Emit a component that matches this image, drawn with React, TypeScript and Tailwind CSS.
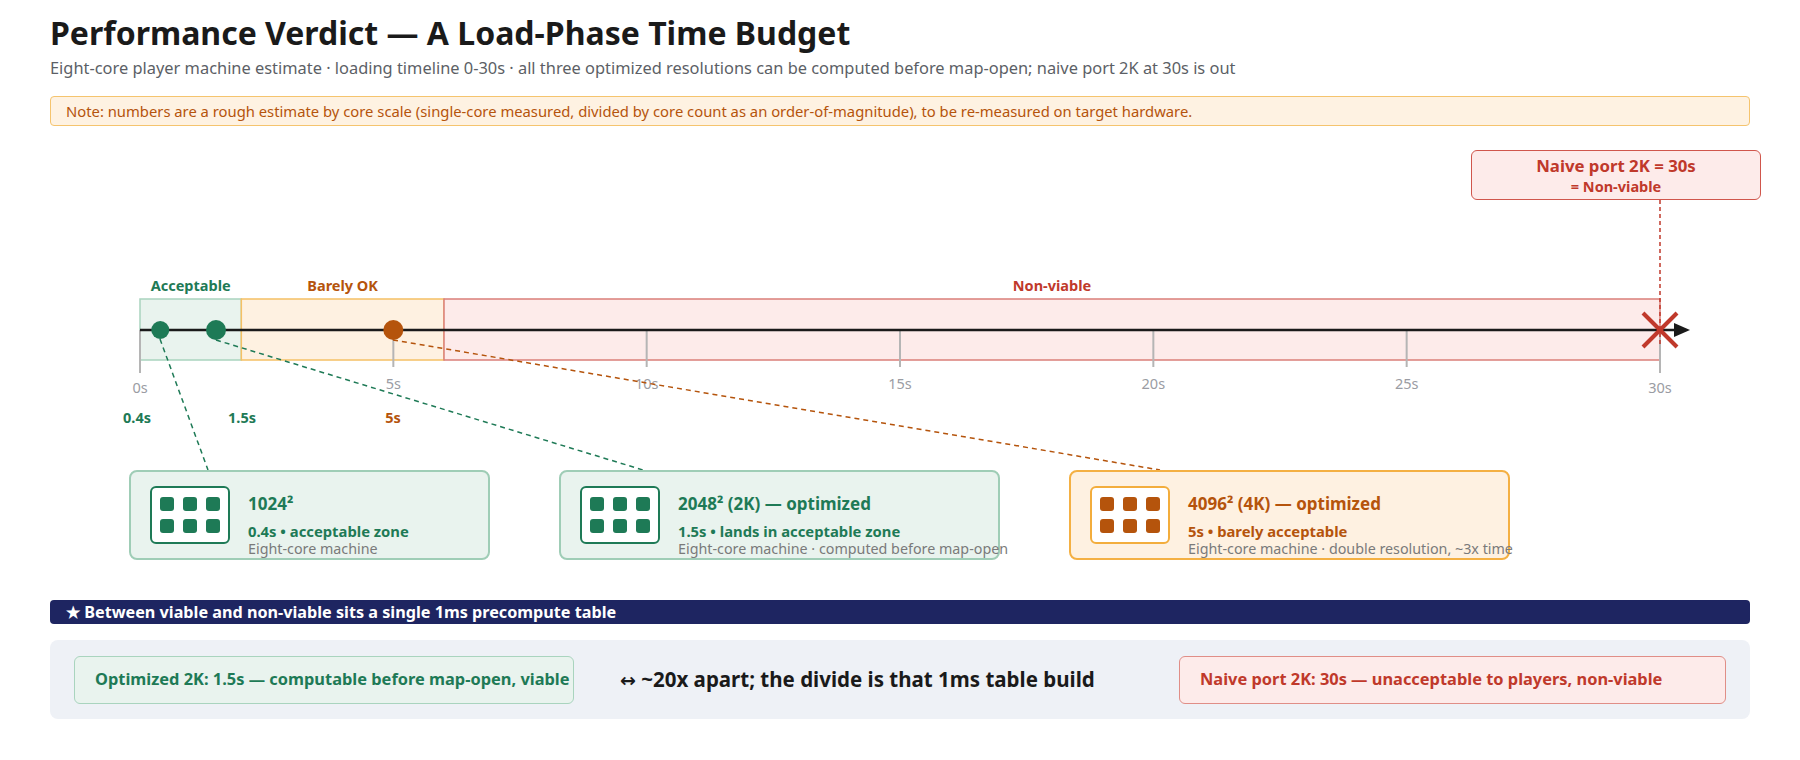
const GREEN = "#1e7a56"
const ORANGE = "#b5540c"
const RED = "#c0392b"

// timeline scale: 0s at x=140, 30s at x=1660 (page coordinates)
const tx = (t: number) => 140 + (t * 1520) / 30

const ticks = [0, 5, 10, 15, 20, 25, 30]

function Timeline() {
  return (
    <svg width="1700" height="344" viewBox="50 126 1700 344" className="block overflow-visible">
      <rect x={tx(0)} y={299} width={tx(2) - tx(0)} height={61} fill="#e9f3ee" stroke="#a9d4be" strokeWidth={1.5} />
      <rect x={tx(2)} y={299} width={tx(6) - tx(2)} height={61} fill="#fef1e1" stroke="#f5c064" strokeWidth={1.5} />
      <rect x={tx(6)} y={299} width={tx(30) - tx(6)} height={61} fill="#fdebea" stroke="#da7f79" strokeWidth={1.5} />

      <g fontSize="14.5" fontWeight="700" textAnchor="middle" dominantBaseline="central">
        <text x={(tx(0) + tx(2)) / 2} y={285} fill={GREEN}>Acceptable</text>
        <text x={(tx(2) + tx(6)) / 2} y={285} fill={ORANGE}>Barely OK</text>
        <text x={(tx(6) + tx(30)) / 2} y={285} fill={RED}>Non-viable</text>
      </g>

      {ticks.map((t) => {
        const end = t === 0 || t === 30
        return (
          <g key={t}>
            <line x1={tx(t)} y1={330} x2={tx(t)} y2={end ? 373 : 367} stroke="#b5b5b5" strokeWidth={2} />
            <text x={tx(t)} y={end ? 387 : 383} fontSize="14.5" fill="#9a9ca3" textAnchor="middle" dominantBaseline="central">
              {t}s
            </text>
          </g>
        )
      })}

      <line x1={tx(0)} y1={330} x2={1676} y2={330} stroke="#1a1a1a" strokeWidth={2.5} />
      <polygon points="1674,323 1690,330 1674,337" fill="#1a1a1a" />

      <line x1={1660} y1={200} x2={1660} y2={345} stroke={RED} strokeWidth={1.5} strokeDasharray="4 3" />
      <g stroke={RED} strokeWidth={4}>
        <line x1={1643} y1={313} x2={1677} y2={347} />
        <line x1={1643} y1={347} x2={1677} y2={313} />
      </g>

      <g strokeWidth={1.5} strokeDasharray="5 4" fill="none">
        <line x1={160} y1={339} x2={208} y2={470} stroke={GREEN} />
        <line x1={216} y1={340} x2={643} y2={470} stroke={GREEN} />
        <line x1={393} y1={340} x2={1160} y2={470} stroke={ORANGE} />
      </g>

      <circle cx={tx(0.4)} cy={330} r={9} fill={GREEN} />
      <circle cx={tx(1.5)} cy={330} r={10} fill={GREEN} />
      <circle cx={tx(5)} cy={330} r={10} fill={ORANGE} />

      <g fontSize="14.5" fontWeight="700" textAnchor="middle" dominantBaseline="central">
        <text x={137} y={417} fill={GREEN}>0.4s</text>
        <text x={242} y={417} fill={GREEN}>1.5s</text>
        <text x={393} y={417} fill={ORANGE}>5s</text>
      </g>
    </svg>
  )
}

function GridIcon({ tone }: { tone: "green" | "orange" }) {
  const box = tone === "green" ? "border-[#1e7a56]" : "border-[#f3ad3c]"
  const sq = tone === "green" ? "bg-[#1e7a56]" : "bg-[#b5540c]"
  return (
    <div className={`mt-[14px] flex h-[58px] w-[80px] shrink-0 items-center justify-center rounded-md border-2 bg-white ${box}`}>
      <div className="grid grid-cols-3 gap-x-[9px] gap-y-[8px]">
        {Array.from({ length: 6 }).map((_, i) => (
          <div key={i} className={`h-[14px] w-[14px] rounded-[3px] ${sq}`} />
        ))}
      </div>
    </div>
  )
}

type CardProps = {
  tone: "green" | "orange"
  width: string
  title: string
  verdict: string
  note: string
}

function ResCard({ tone, width, title, verdict, note }: CardProps) {
  const shell = tone === "green" ? "border-[#9fcdb6] bg-[#e9f3ee]" : "border-[#f4b043] bg-[#fef1e1]"
  const text = tone === "green" ? "text-[#1e7a56]" : "text-[#b5540c]"
  return (
    <div className={`flex h-[90px] shrink-0 items-start gap-[18px] rounded-lg border-2 pl-[19px] ${width} ${shell}`}>
      <GridIcon tone={tone} />
      <div className="mt-[21px] whitespace-nowrap">
        <p className={`text-[17px] font-bold leading-[22px] ${text}`}>{title}</p>
        <p className={`mt-[7px] text-[14.8px] font-bold leading-[18px] ${text}`}>{verdict}</p>
        <p className="text-[14.3px] leading-[18px] text-[#7a7a7a]">{note}</p>
      </div>
    </div>
  )
}

export default function App() {
  return (
    <div className="min-h-[760px] w-[1800px] bg-white px-[50px] pt-[14px] font-['Noto_Sans',sans-serif] text-[#1a1a1a]">
      <h1 className="text-[32px] font-bold leading-[38px] text-[#1a1a1a]">Performance Verdict — A Load-Phase Time Budget</h1>
      <p className="mt-[4px] text-[16.4px] leading-[24px] text-[#5c5f66]">
        Eight-core player machine estimate · loading timeline 0-30s · all three optimized resolutions can be computed before map-open; naive port 2K at 30s is out
      </p>

      <div className="mt-[16px] flex h-[30px] items-center rounded border border-[#f5c46e] bg-[#fef2e2] px-[15px] text-[14.8px] text-[#b5540c]">
        Note: numbers are a rough estimate by core scale (single-core measured, divided by core count as an order-of-magnitude), to be re-measured on target hardware.
      </div>

      <div className="relative">
        <Timeline />
        <div className="absolute left-[1421px] top-[24px] h-[50px] w-[290px] rounded-md border-[1.5px] border-[#d0564c] bg-[#fdebea] pt-[4px] text-center font-bold text-[#c0392b]">
          <p className="text-[16.8px] leading-[22px]">Naive port 2K = 30s</p>
          <p className="text-[14.5px] leading-[18px]">= Non-viable</p>
        </div>

        <div className="ml-[79px] flex gap-[69px]">
          <ResCard tone="green" width="w-[361px]" title="1024²" verdict="0.4s • acceptable zone" note="Eight-core machine" />
          <ResCard
            tone="green"
            width="w-[441px]"
            title="2048² (2K) — optimized"
            verdict="1.5s • lands in acceptable zone"
            note="Eight-core machine · computed before map-open"
          />
          <ResCard
            tone="orange"
            width="w-[441px]"
            title="4096² (4K) — optimized"
            verdict="5s • barely acceptable"
            note="Eight-core machine · double resolution, ~3x time"
          />
        </div>
      </div>

      <div className="mt-[40px] h-[24px] rounded bg-[#1e2561] pl-[16px] text-[16.2px] font-bold leading-[24px] text-white">
        ★ Between viable and non-viable sits a single 1ms precompute table
      </div>

      <div className="mt-[16px] flex h-[79px] items-center gap-[46px] rounded-lg bg-[#eef1f6] px-[24px]">
        <div className="flex h-[48px] w-[500px] items-center rounded-md border-[1.5px] border-[#a9d4be] bg-[#e9f3ee] px-[20px] text-[16.4px] font-bold whitespace-nowrap text-[#1e7a56]">
          Optimized 2K: 1.5s — computable before map-open, viable
        </div>
        <p className="text-[20.5px] font-bold whitespace-nowrap text-[#1a1a1a]">
          <span className="font-['DejaVu_Sans',sans-serif] text-[19px]">↔</span> ~20x apart; the divide is that 1ms table build
        </p>
        <div className="ml-auto flex h-[48px] w-[547px] items-center rounded-md border-[1.5px] border-[#e08e87] bg-[#fdebea] px-[20px] text-[16.4px] font-bold whitespace-nowrap text-[#c0392b]">
          Naive port 2K: 30s — unacceptable to players, non-viable
        </div>
      </div>
    </div>
  )
}
